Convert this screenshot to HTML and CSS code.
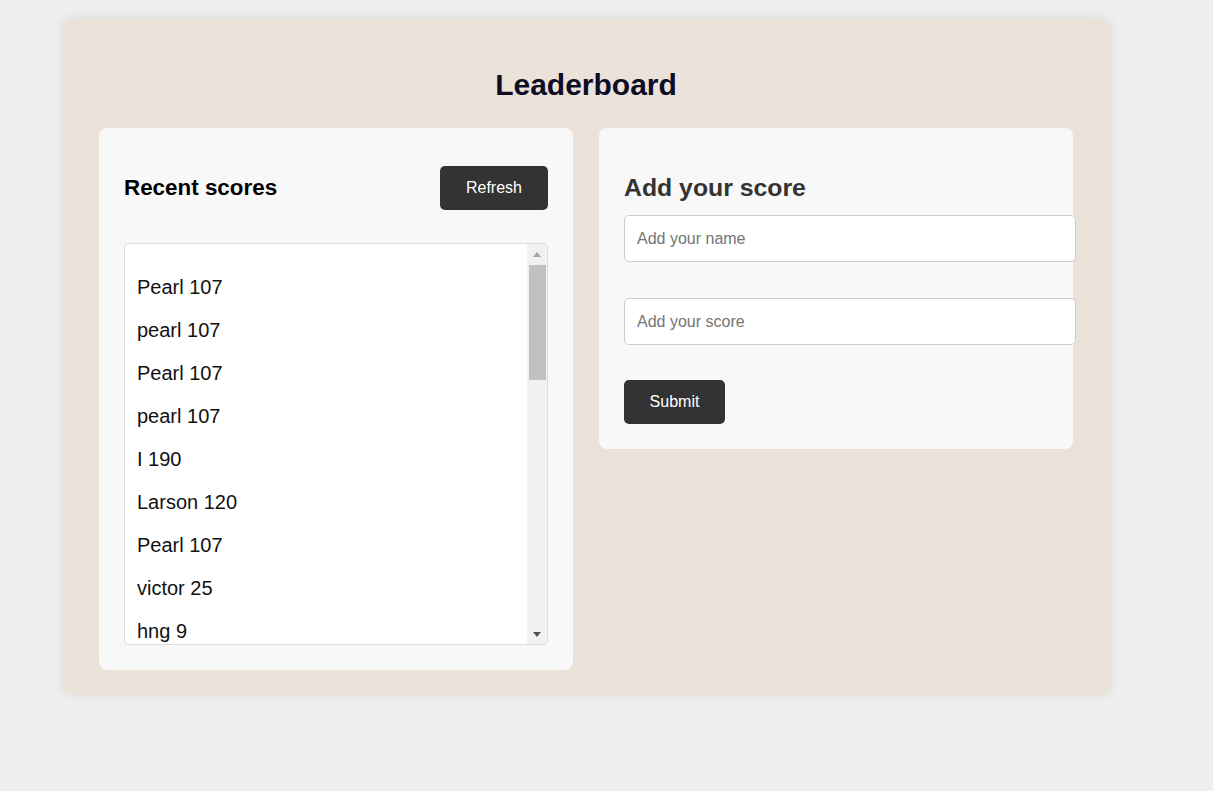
FILE: index.html
```html
<!DOCTYPE html>
<html lang="en">
<head>
<meta charset="utf-8">
<title>Leaderboard</title>
<link rel="stylesheet" href="styles.css">
</head>
<body>
<main class="board">
  <h1 class="title">Leaderboard</h1>
  <div class="columns">
    <section class="card scores">
      <div class="scores-head">
        <h2 class="scores-title">Recent scores</h2>
        <button class="btn" type="button">Refresh</button>
      </div>
      <div class="list-box">
        <ul class="score-list">
          <li>Pearl 107</li>
          <li>pearl 107</li>
          <li>Pearl 107</li>
          <li>pearl 107</li>
          <li>I 190</li>
          <li>Larson 120</li>
          <li>Pearl 107</li>
          <li>victor 25</li>
          <li>hng 9</li>
        </ul>
        <div class="scrollbar" aria-hidden="true">
          <span class="sb-btn"><span class="arrow-up"></span></span>
          <span class="sb-track"><span class="sb-thumb"></span></span>
          <span class="sb-btn"><span class="arrow-down"></span></span>
        </div>
      </div>
    </section>
    <section class="card add">
      <h2 class="add-title">Add your score</h2>
      <form class="add-form">
        <input class="field" type="text" placeholder="Add your name">
        <input class="field" type="text" placeholder="Add your score">
        <button class="btn btn-submit" type="button">Submit</button>
      </form>
    </section>
  </div>
</main>
</body>
</html>
```
FILE: styles.css
```css
html, body {
  margin: 0;
  padding: 0;
}
body {
  background: #efefef;
  font-family: "Liberation Sans", Arial, sans-serif;
  min-height: 791px;
}
.board {
  box-sizing: border-box;
  width: 1049px;
  margin: 18px 0 0 62px;
  padding: 50px 38px 25px 37px;
  background: #ebe3d9;
  border-radius: 10px;
  box-shadow: 0 0 12px rgba(0, 0, 0, 0.08);
}
.title {
  margin: 0 0 26px;
  text-align: center;
  font-size: 30px;
  line-height: 34px;
  font-weight: bold;
  color: #0d0d26;
}
.columns {
  display: flex;
  gap: 26px;
  align-items: flex-start;
}
.card {
  box-sizing: border-box;
  width: 474px;
  background: #f8f8f8;
  border-radius: 8px;
}
.scores {
  padding: 38px 25px 25px;
}
.scores-head {
  display: flex;
  justify-content: space-between;
  align-items: center;
  height: 44px;
  margin-bottom: 33px;
}
.scores-title {
  margin: 0;
  font-size: 22.4px;
  font-weight: bold;
  color: #000;
}
.btn {
  height: 44px;
  border: none;
  border-radius: 5px;
  background: #333;
  color: #fff;
  font-family: "Liberation Sans", Arial, sans-serif;
  font-size: 16px;
  padding: 0 26px;
  cursor: pointer;
}
.list-box {
  box-sizing: border-box;
  height: 402px;
  display: flex;
  background: #fff;
  border: 1px solid #ddd;
  border-radius: 4px;
  overflow: hidden;
}
.score-list {
  flex: 1;
  margin: 0;
  padding: 22px 0 0;
  list-style: none;
  overflow: hidden;
}
.score-list li {
  padding: 10px 12px;
  font-size: 20px;
  line-height: 23px;
  color: #111;
}
.scrollbar {
  width: 20px;
  flex: none;
  display: flex;
  flex-direction: column;
  background: #f1f1f1;
}
.sb-btn {
  height: 21px;
  flex: none;
  display: flex;
  align-items: center;
  justify-content: center;
}
.arrow-up {
  width: 0;
  height: 0;
  border-left: 4px solid transparent;
  border-right: 4px solid transparent;
  border-bottom: 5px solid #a3a3a3;
  margin-top: -1px;
}
.arrow-down {
  width: 0;
  height: 0;
  border-left: 4px solid transparent;
  border-right: 4px solid transparent;
  border-top: 5px solid #505050;
  margin-top: 1px;
}
.sb-track {
  flex: 1;
  display: flex;
  flex-direction: column;
}
.sb-thumb {
  height: 115px;
  margin: 0 1px 0 2px;
  background: #c1c1c1;
}
.add {
  padding: 25px 25px 25px;
}
.add-title {
  margin: 21px 0 13px;
  font-size: 24.8px;
  line-height: 28px;
  font-weight: bold;
  color: #333;
}
.add-form {
  display: flex;
  flex-direction: column;
  align-items: flex-start;
}
.field {
  box-sizing: border-box;
  width: 452px;
  height: 47px;
  padding: 0 12px;
  margin-bottom: 36px;
  border: 1px solid #ccc;
  border-radius: 5px;
  background: #fff;
  font-family: "Liberation Sans", Arial, sans-serif;
  font-size: 16px;
  color: #333;
}
.field::placeholder {
  color: #757575;
}
.field + .field {
  margin-bottom: 35px;
}
.btn-submit {
  width: 101px;
  padding: 0;
}
```
